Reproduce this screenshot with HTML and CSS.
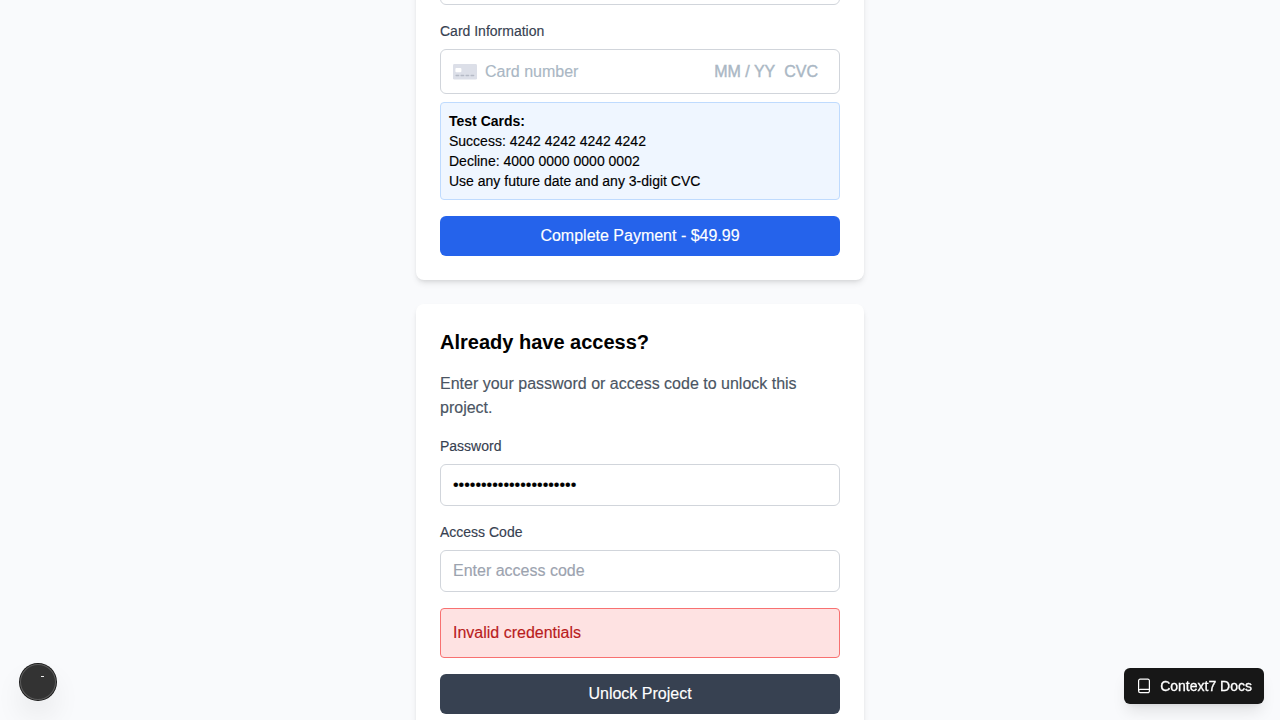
FILE: index.html
```html
<!DOCTYPE html>
<html lang="en">
<head>
<meta charset="utf-8">
<title>Project Access</title>
<link rel="stylesheet" href="styles.css">
</head>
<body>
<main class="page">
  <section class="card card-payment">
    <div class="field">
      <input class="input" type="text" aria-label="Email">
    </div>
    <div class="field">
      <label class="label">Card Information</label>
      <div class="card-element">
        <svg class="card-icon" width="24" height="16" viewBox="0 0 24 16">
          <rect width="24" height="15.6" rx="1.4" fill="#dcdfe8"/>
          <rect x="2.400" y="4" width="6" height="4.300" rx="1" fill="#fff"/>
          <path d="M3.200 11.500h2.400M8.200 11.500h2.400M13.200 11.500h2.400M18.200 11.500h2.400" stroke="#b5bac6" stroke-width="1.500" stroke-linecap="round"/>
        </svg>
        <span class="card-number">Card number</span>
        <span class="card-expiry">MM / YY</span>
        <span class="card-cvc">CVC</span>
      </div>
      <div class="test-cards">
        <strong>Test Cards:</strong>
        <div>Success: 4242 4242 4242 4242</div>
        <div>Decline: 4000 0000 0000 0002</div>
        <div>Use any future date and any 3-digit CVC</div>
      </div>
    </div>
    <button class="button button-pay">Complete Payment - $49.99</button>
  </section>

  <section class="card card-unlock">
    <h2 class="title">Already have access?</h2>
    <p class="intro">Enter your password or access code to unlock this project.</p>
    <div class="field">
      <label class="label" for="password">Password</label>
      <input class="input" id="password" type="password" value="project-password-12345">
    </div>
    <div class="field">
      <label class="label" for="code">Access Code</label>
      <input class="input" id="code" type="text" placeholder="Enter access code">
    </div>
    <div class="error">Invalid credentials</div>
    <button class="button button-unlock">Unlock Project</button>
  </section>
</main>

<div class="dev-badge"><span class="dev-mark"></span></div>

<button class="docs-button">
  <svg width="16" height="16" viewBox="0 0 16 16" fill="none" stroke="currentColor" stroke-width="1.200" stroke-linejoin="round">
    <path d="M2.600 13V2.700a1.600 1.600 0 0 1 1.600-1.600h7.600a1.600 1.600 0 0 1 1.600 1.600v10.400a1.600 1.600 0 0 1-1.600 1.600H4.300a1.700 1.700 0 0 1 0-3.400h9.100"/>
  </svg>
  <span>Context7 Docs</span>
</button>
</body>
</html>
```
FILE: styles.css
```css
* {
  box-sizing: border-box;
}

body {
  margin: 0;
  height: 720px;
  overflow: hidden;
  background: #f9fafc;
  color: #000;
  font: 16px/24px "Liberation Sans", Arial, sans-serif;
  -webkit-text-stroke: .15px currentColor;
}

.page {
  display: flex;
  flex-direction: column;
  gap: 24px;
  width: 448px;
  margin: -61px auto 0;
}

.card {
  display: flex;
  flex-direction: column;
  padding: 24px;
  border-radius: 8px;
  background: #fff;
  box-shadow: 0 4px 6px -1px rgba(0, 0, 0, .1), 0 2px 4px -2px rgba(0, 0, 0, .1);
}

.field {
  display: flex;
  flex-direction: column;
  margin-bottom: 16px;
}

.label {
  margin-bottom: 8px;
  color: #374151;
  font-size: 14px;
  line-height: 20px;
}

.input {
  width: 100%;
  height: 42px;
  padding: 8px 12px;
  border: 1px solid #d1d5db;
  border-radius: 6px;
  background: #fff;
  color: #000;
  font: inherit;
}

.input::placeholder {
  color: #9ca3af;
}

.card-element {
  display: flex;
  align-items: center;
  height: 45px;
  padding: 0 21px 0 12px;
  border: 1px solid #d1d5db;
  border-radius: 6px;
  color: #aab7c4;
}

.card-number {
  flex: 1;
  margin-left: 8px;
}

.card-cvc {
  margin-left: 9px;
}

.card-expiry,
.card-cvc {
  -webkit-text-stroke: .4px currentColor;
}

.test-cards {
  margin-top: 8px;
  padding: 8px;
  border: 1px solid #bfdbfe;
  border-radius: 4px;
  background: #eff6ff;
  font-size: 14px;
  line-height: 20px;
}

.test-cards strong {
  display: block;
  -webkit-text-stroke: 0;
}

.button {
  height: 40px;
  padding: 8px 16px;
  border: 0;
  border-radius: 6px;
  color: #fff;
  font: inherit;
}

.button-pay {
  background: #2563eb;
}

.button-unlock {
  background: #374151;
}

.title {
  margin: 0 0 16px;
  font-size: 20px;
  line-height: 28px;
  -webkit-text-stroke: 0;
}

.intro {
  margin: 0 0 16px;
  color: #4b5563;
}

.error {
  margin-bottom: 16px;
  padding: 12px;
  border: 1px solid #f87171;
  border-radius: 4px;
  background: #fee2e2;
  color: #b91c1c;
}

.dev-badge {
  position: fixed;
  left: 20px;
  bottom: 20px;
  width: 36px;
  height: 36px;
  border-radius: 50%;
  background: #333;
  box-shadow: 0 0 0 1px #171717, inset 0 0 0 1px #5c5c5c, 0 16px 32px -8px rgba(0, 0, 0, .24);
}

.dev-mark {
  position: absolute;
  left: 21px;
  top: 12px;
  width: 3px;
  height: 1px;
  background: #eee;
}

.docs-button {
  position: fixed;
  right: 16px;
  bottom: 16px;
  display: flex;
  align-items: center;
  gap: 8px;
  height: 36px;
  padding: 0 12px;
  border: 0;
  border-radius: 6px;
  background: #171717;
  color: #fff;
  font: 14px/20px "Liberation Sans", Arial, sans-serif;
  -webkit-text-stroke: .3px currentColor;
  box-shadow: 0 10px 15px -3px rgba(0, 0, 0, .1), 0 4px 6px -4px rgba(0, 0, 0, .1);
}
```
